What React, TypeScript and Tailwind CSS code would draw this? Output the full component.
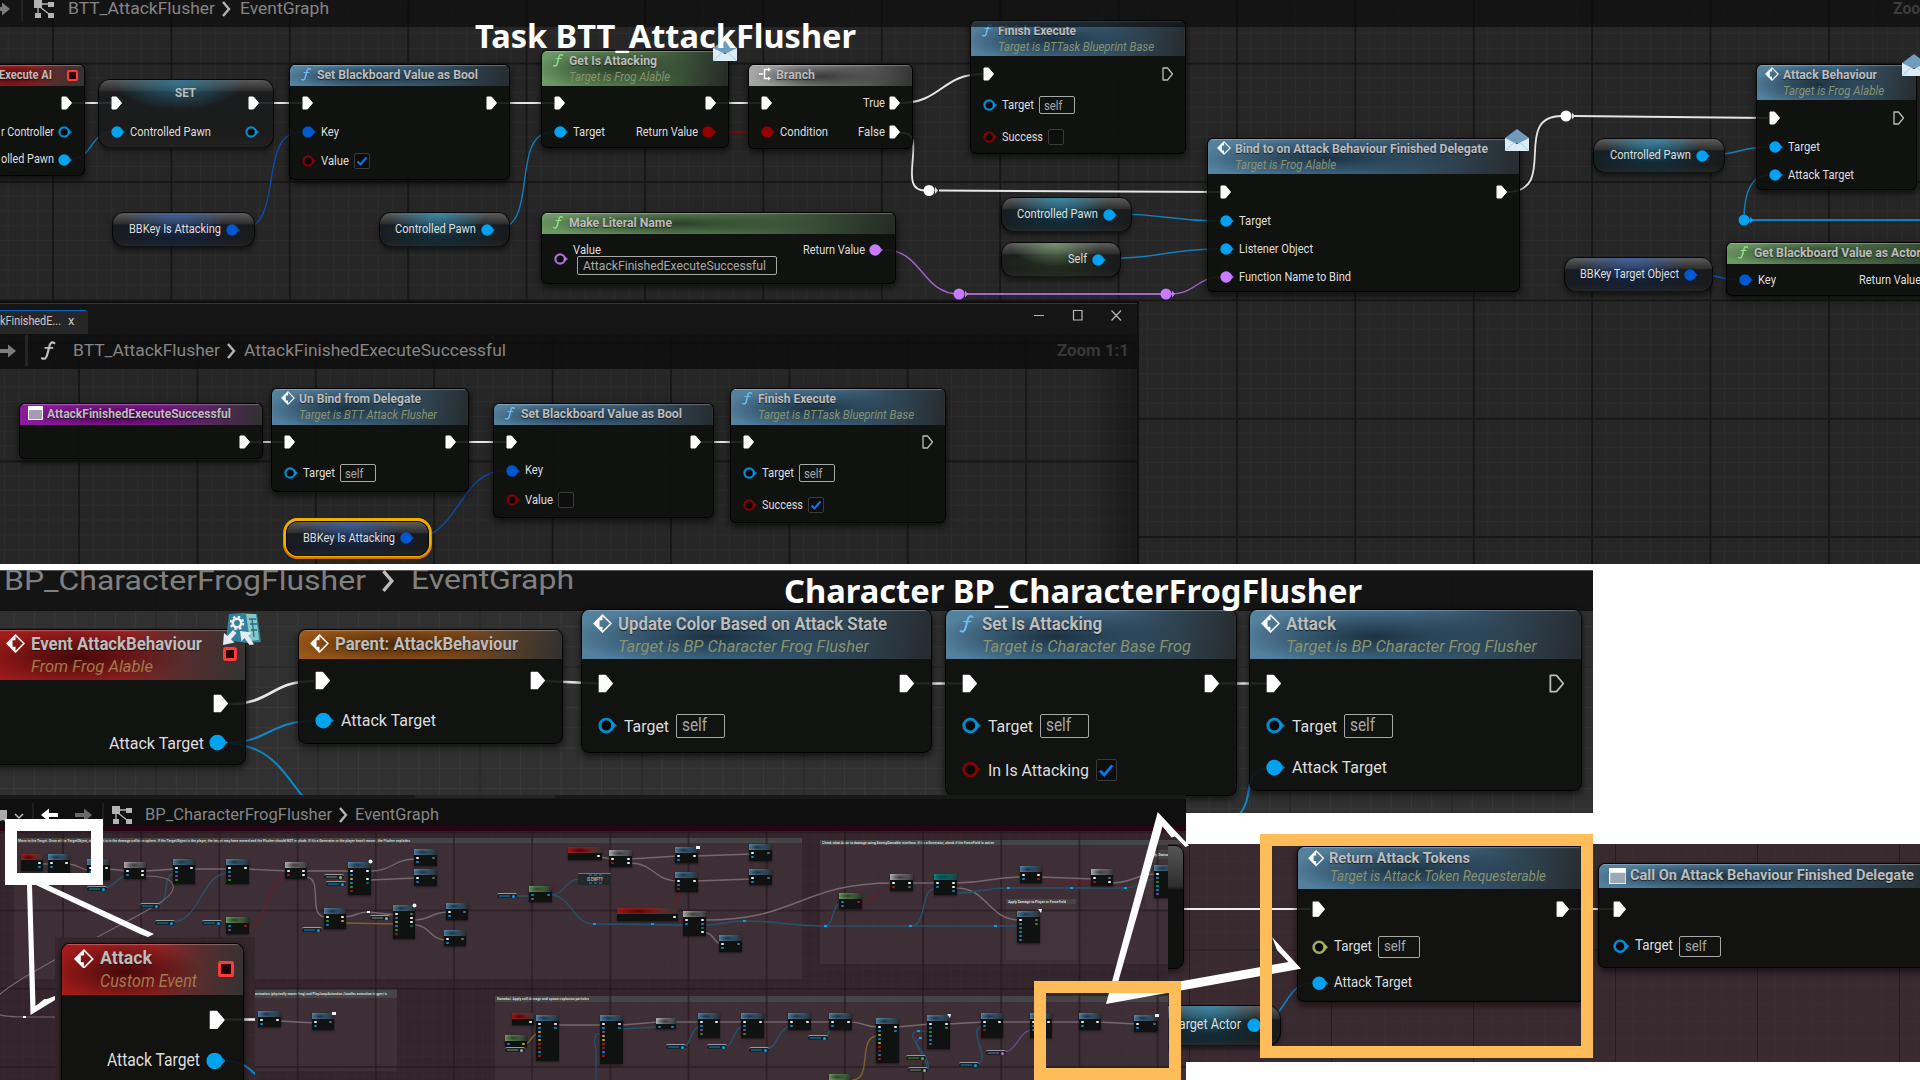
import React, { useLayoutEffect, useRef } from "react";

type Tone = "blue" | "green" | "red" | "gray" | "purple" | "orange" | "teal";
type Kind = "exec" | "hollow" | "ring" | "dot";
type PinSpec = { k: Kind; c?: string; t?: string; w?: number; self?: boolean; chk?: "on" | "off" };
type Row = { y: number; l?: PinSpec; r?: PinSpec };

const CYAN = "#00a2f2";
const KEY = "#0058d0";
const RED = "#960000";
const NAME = "#c97bff";

const tones: Record<Tone, string> = {
  blue: "bg-[radial-gradient(ellipse_42%_60%_at_38%_55%,#1b3140_0%,#1b314000_100%),linear-gradient(100deg,#55829f_0%,#456f8e_45%,#31495a_72%,#262b2e_100%)]",
  green: "bg-[radial-gradient(ellipse_42%_60%_at_38%_50%,#2b4028_0%,#2b402800_100%),linear-gradient(100deg,#6d9a65_0%,#587f52_45%,#3c5539_72%,#252a25_100%)]",
  red: "bg-[radial-gradient(ellipse_42%_60%_at_35%_55%,#450808_0%,#45080800_100%),linear-gradient(100deg,#a31a1a_0%,#9a2224_50%,#5c2c2c_72%,#333_100%)]",
  gray: "bg-[radial-gradient(ellipse_42%_60%_at_45%_55%,#3a3a3a_0%,#3a3a3a00_100%),linear-gradient(100deg,#a8a8a8_0%,#7c7c7c_45%,#5a5a5a_72%,#333_100%)]",
  purple: "bg-[radial-gradient(ellipse_42%_60%_at_42%_55%,#420449_0%,#42044900_100%),linear-gradient(100deg,#8c1a9c_0%,#821a90_55%,#55275c_78%,#303030_100%)]",
  orange: "bg-[radial-gradient(ellipse_42%_60%_at_38%_50%,#4a2707_0%,#4a270700_100%),linear-gradient(100deg,#9a5717_0%,#935318_50%,#5e4128_75%,#303030_100%)]",
  teal: "bg-[radial-gradient(ellipse_42%_60%_at_38%_50%,#044_0%,#04444400_100%),linear-gradient(100deg,#158080_0%,#126a6a_50%,#203c3c_100%)]",
};

/* Text squeezed or stretched horizontally to an exact width. */
function Fit({ w, size, className = "", wrap = "", children }: { w?: number; size: number; className?: string; wrap?: string; children: string }) {
  const ref = useRef<HTMLSpanElement>(null);
  useLayoutEffect(() => {
    const el = ref.current;
    if (!el || !w) return;
    el.style.transform = "none";
    el.style.transform = `scaleX(${w / el.getBoundingClientRect().width})`;
  }, [w, size, children]);
  return (
    <span className={`block shrink-0 whitespace-nowrap leading-none ${wrap}`} style={{ width: w, fontSize: size }}>
      <span ref={ref} className={`inline-block origin-left whitespace-nowrap leading-none ${className}`}>
        {children}
      </span>
    </span>
  );
}

function Label({ x, y, w, size, className = "", children }: { x: number; y: number; w?: number; size: number; className?: string; children: string }) {
  return (
    <div className="absolute flex h-0 items-center" style={{ left: x, top: y }}>
      <Fit w={w} size={size} className={className}>{children}</Fit>
    </div>
  );
}

function Pin({ p, s }: { p: PinSpec; s: number }) {
  if (p.k === "exec" || p.k === "hollow") {
    const on = p.k === "exec";
    return (
      <svg className="shrink-0" width={11.5 * s} height={14 * s} viewBox="0 0 11.5 14">
        <path d="M1 1h4.5L10.5 7l-5 6H1z" fill={on ? "#fff" : "none"} stroke={on ? "#fff" : "#bdbdbd"} strokeWidth={on ? 1 : 1.3} strokeLinejoin="round" />
      </svg>
    );
  }
  return (
    <svg className="shrink-0" width={14 * s} height={14 * s} viewBox="0 0 14 14">
      <path d="M10.6 4.2L14 7l-3.400 2.800z" fill={p.c} opacity=".8" />
      {p.k === "dot" ? <circle cx="6.100" cy="7" r="5.800" fill={p.c} /> : <circle cx="6.100" cy="7" r="4.700" fill="#050505" stroke={p.c} strokeWidth="2.200" opacity=".85" />}
    </svg>
  );
}

function Check({ on, s }: { on: boolean; s: number }) {
  return (
    <span className="flex shrink-0 items-center justify-center rounded-[2px] border border-[#3a3a3a] bg-[#0e0e0e]" style={{ width: 16 * s, height: 16 * s }}>
      {on && (
        <svg width={12 * s} height={12 * s} viewBox="0 0 12 12">
          <path d="M1.500 6.500l3 3L10.500 2.500" fill="none" stroke="#0a76f0" strokeWidth="2" />
        </svg>
      )}
    </span>
  );
}

function Side({ p, s, right }: { p: PinSpec; s: number; right?: boolean }) {
  return (
    <div className={`flex items-center ${right ? "flex-row-reverse" : ""}`} style={{ gap: (right ? 4 : 5) * s }}>
      <Pin p={p} s={s} />
      {p.t && <Fit w={p.w} size={12.4 * s} className="text-[#dedede]">{p.t}</Fit>}
      {p.self && (
        <span className="flex shrink-0 items-center rounded-[2px] border border-[#a8a8a8]" style={{ width: 36 * s, height: 18 * s, paddingLeft: 4 * s }}>
          <Fit w={18.500 * s} size={13 * s} className="text-[#a8a8a8]">self</Fit>
        </span>
      )}
      {p.chk && <Check on={p.chk === "on"} s={s} />}
    </div>
  );
}

function Icon({ kind, s }: { kind: string; s: number }) {
  if (kind === "f")
    return (
      <svg className="shrink-0" width={14 * s} height={14 * s} viewBox="0 0 14 14" fill="none" stroke="currentColor" strokeLinecap="round">
        <path d="M11.300 2.200C9.500.9 8.300 2 7.800 4.500L6.400 10c-.6 2.600-1.900 3.500-3.700 2.600" strokeWidth="1.500" />
        <path d="M5 5.500h5" strokeWidth="1.200" />
      </svg>
    );
  if (kind === "event")
    return (
      <svg className="shrink-0" width={14 * s} height={14 * s} viewBox="0 0 14 14">
        <path d="M7 .8L13.200 7 7 13.200.8 7z" fill="none" stroke="#f0f0f0" strokeWidth="1.200" />
        <path d="M7 .8V4.600H4.800v4.800H7v3.800L.8 7z" fill="#fff" />
      </svg>
    );
  if (kind === "branch")
    return (
      <svg className="shrink-0" width={14 * s} height={14 * s} viewBox="0 0 14 14" fill="none" stroke="#fff" strokeWidth="1.500">
        <path d="M1 7h4M11 2.500H6.500v9H11" />
        <path d="M10 .5l3 2-3 2zM10 9.500l3 2-3 2z" fill="#fff" stroke="none" />
      </svg>
    );
  return (
    <svg className="shrink-0" width={15 * s} height={14 * s} viewBox="0 0 15 14">
      <path d="M.5.5h14v13H.5z" fill="#a9b3b8" fillOpacity=".85" stroke="#fff" />
      <path d="M.5.5h14V4H.5z" fill="#fff" />
    </svg>
  );
}

type NodeProps = {
  x: number; y: number; w: number; h: number; hh: number; tone: Tone; icon?: string;
  title: string; tx: number; tw: number; sub?: string; sw?: number; rows: Row[]; s?: number; stop?: boolean; iconTone?: string; bias?: number;
};

/* Graph node: header strip plus pin rows centred on their y offsets. */
function GNode({ x, y, w, h, hh, tone, icon, title, tx, tw, sub, sw, rows, s = 1, stop, iconTone = "text-[#6cbcf2]", bias = 0 }: NodeProps) {
  const lift = s === 1 ? 2 : 0;
  return (
    <div
      className="absolute overflow-hidden border border-black/90 bg-[#0e110ee8] shadow-[0_3px_6px_1px_rgba(0,0,0,0.55)]"
      style={{ left: x - 1, top: y, width: w + 1, height: h, borderRadius: 6 * s }}
    >
      <div className={`relative shadow-[inset_0_1px_1px_rgba(255,255,255,0.28)] ${tones[tone]}`} style={{ height: hh }}>
        <div className="flex items-center" style={{ height: 20.5 * s - lift }}>
          {icon && (
            <span className={`flex w-0 shrink-0 justify-center ${iconTone}`} style={{ marginLeft: tx - 11.200 * s, marginRight: 11.200 * s }}>
              <Icon kind={icon} s={s} />
            </span>
          )}
          <span className="block" style={{ marginLeft: icon ? 0 : tx }}>
            <Fit w={tw} size={13.200 * s} className="font-bold text-[#bdbdbd] [text-shadow:0_1px_1px_rgba(0,0,0,0.6)]">{title}</Fit>
          </span>
        </div>
        {sub && (
          <div className="flex h-0 items-center" style={{ marginLeft: tx, marginTop: 6 * s + lift }}>
            <Fit w={sw} size={12.400 * s} className={`italic ${tone === "red" ? "text-[#a2794c]" : "text-[#86936f]"}`}>{sub}</Fit>
          </div>
        )}
        {stop && (
          <span
            className="absolute border-[#fb3a3a] bg-[#200]"
            style={{ right: 6.500 * s, top: hh / 2 - 6 * s, width: 11 * s, height: 11 * s, borderWidth: 2.500 * s, borderRadius: 2 * s }}
          />
        )}
      </div>
      <div style={{ paddingLeft: 11 * s + 1, paddingRight: 12 * s + bias }}>
        {rows.map((r, i) => (
          <div key={i} className="flex h-0 items-center justify-between" style={{ marginTop: r.y - (i ? rows[i - 1].y : y + hh + 1) }}>
            {r.l ? <Side p={r.l} s={s} /> : <span />}
            {r.r && <Side p={r.r} s={s} right />}
          </div>
        ))}
      </div>
    </div>
  );
}

const glows: Record<string, string> = {
  cyan: "bg-[radial-gradient(ellipse_38%_70%_at_45%_0%,#3593b8cc_0%,#3593b800_100%),radial-gradient(ellipse_55%_60%_at_45%_60%,#0c3c52aa_0%,#0c3c5200_100%),linear-gradient(180deg,#5c5c5c_0%,#2e2e2e_32%,#181a1b_36%,#1a1a1a_80%,#242424_100%)]",
  key: "bg-[radial-gradient(ellipse_38%_70%_at_45%_0%,#3c62a8cc_0%,#3c62a800_100%),radial-gradient(ellipse_55%_60%_at_45%_60%,#10254caa_0%,#10254c00_100%),linear-gradient(180deg,#5c5c5c_0%,#2e2e2e_32%,#181a1b_36%,#1a1a1a_80%,#242424_100%)]",
  green: "bg-[radial-gradient(ellipse_38%_70%_at_45%_0%,#7fa078cc_0%,#7fa07800_100%),radial-gradient(ellipse_55%_60%_at_45%_60%,#263a22aa_0%,#263a2200_100%),linear-gradient(180deg,#5c5c5c_0%,#2e2e2e_32%,#181a1b_36%,#1a1a1a_80%,#242424_100%)]",
};

function Pill({ x, y, w, h = 35, glow, t, tw, c = CYAN, s = 1, selected }: { x: number; y: number; w: number; h?: number; glow: string; t: string; tw: number; c?: string; s?: number; selected?: boolean }) {
  return (
    <div
      className={`absolute flex items-center justify-end border border-black/80 ${selected ? "shadow-[0_-1px_0_2px_#f0b000,0_1px_0_2px_#d87000,0_0_0_3px_#e88a00]" : "shadow-[0_3px_5px_rgba(0,0,0,0.5)]"} ${glows[glow]}`}
      style={{ left: x, top: y, width: w, height: h, borderRadius: 12 * s, paddingRight: 14 * s, gap: 5 * s }}
    >
      <Fit w={tw} size={12.400 * s} className="text-[#dedede]">{t}</Fit>
      <Pin p={{ k: "dot", c }} s={s} />
    </div>
  );
}

type Wire = [number, number, number, number, string, number?];

/* Bezier wires with horizontal tangents. */
function Wires({ list, extra }: { list: Wire[]; extra?: React.ReactNode }) {
  return (
    <svg className="absolute left-0 top-0" width="1920" height="1080" fill="none">
      {list.map(([x1, y1, x2, y2, c, sw = 1.400], i) => {
        const m = Math.max(Math.abs(x2 - x1) / 2, Math.min(Math.abs(y2 - y1) * 0.5, 45));
        const d = Math.abs(y2 - y1) < 4 ? `M${x1} ${y1}L${x2} ${y2}` : `M${x1} ${y1}C${x1 + m} ${y1} ${x2 - m} ${y2} ${x2} ${y2}`;
        return <path key={i} d={d} stroke={c} strokeWidth={sw} />;
      })}
      {extra}
    </svg>
  );
}

/* Clipped window whose children share the canvas coordinates. */
function Panel({ x, y, w, h, className, children }: { x: number; y: number; w: number; h: number; className: string; children: React.ReactNode }) {
  return (
    <section className={`absolute overflow-hidden ${className}`} style={{ left: x, top: y, width: w, height: h }}>
      <div className="absolute h-[1080px] w-[1920px]" style={{ left: -x, top: -y }}>{children}</div>
    </section>
  );
}

function Grid({ x, y, p, major, minor }: { x: number; y: number; p: number; major: string; minor: string }) {
  const q = p / 8;
  const line = (c: string, t: number) => `linear-gradient(to right,${c} ${t}px,transparent ${t}px),linear-gradient(to bottom,${c} ${t}px,transparent ${t}px)`;
  return (
    <div
      className="absolute inset-0"
      style={{
        backgroundImage: `${line(major, 1.5)},${line(minor, 1)}`,
        backgroundSize: `${p}px ${p}px,${p}px ${p}px,${q}px ${q}px,${q}px ${q}px`,
        backgroundPosition: `${x}px ${y}px,${x}px ${y}px,${x}px ${y}px,${x}px ${y}px`,
      }}
    />
  );
}

function Box({ x, y, w, h, className }: { x: number; y: number; w: number; h: number; className: string }) {
  return <div className={`absolute ${className}`} style={{ left: x, top: y, width: w, height: h }} />;
}

function Envelope({ x, y }: { x: number; y: number }) {
  return (
    <svg className="absolute" style={{ left: x, top: y }} width="24" height="23" viewBox="0 0 24 23">
      <path d="M0 9L12 0l12 9v5H0z" fill="#6f9bbd" />
      <path d="M0 9l12 6 12-6v13H0z" fill="#dcecf6" />
      <path d="M0 22l9-8.500M24 22l-9-8.500" stroke="#a9c7dc" strokeWidth="1" />
    </svg>
  );
}

const glyphShapes = {
  right: <path d="M0 8h9V3.500L17 10l-8 6.500V12H0z" fill="currentColor" />,
  left: <path d="M17 8H8V3.500L0 10l8 6.500V12h9z" fill="currentColor" />,
  chevron: <path d="M6 3l6 7-6 7" fill="none" stroke="currentColor" strokeWidth="2.400" />,
  graph: (
    <g fill="currentColor">
      <path d="M0 1h8v8H0zM14 3h6v5h-6zM1 14h6v5H1zM14 14h6v5h-6z" />
      <path d="M8 5h6M4 9v6M6 8l9 7" stroke="currentColor" strokeWidth="1.300" />
    </g>
  ),
};

function Glyph({ name, className = "", size = 20 }: { name: keyof typeof glyphShapes; className?: string; size?: number }) {
  return (
    <svg className={`shrink-0 ${className}`} width={size} height={size} viewBox="0 0 20 20">
      {glyphShapes[name]}
    </svg>
  );
}

const X: PinSpec = { k: "exec" };
const HOLLOW: PinSpec = { k: "hollow" };
const inPin = (t: string, w: number, c = CYAN): PinSpec => ({ k: "dot", c, t, w });

function TaskGraph() {
  const W = "#e6e6e6";
  const B = "#0f80bd";
  return (
    <Panel x={0} y={0} w={1920} h={564} className="bg-[#262626]">
      <Grid x={52} y={62.500} p={118.400} major="#171717" minor="#2c2c2c" />
      <Wires
        list={[
          [72, 103, 111, 103, W, 2], [259, 103, 302, 103, W, 2], [498, 103, 554, 103, W, 2], [715, 103, 761, 103, W, 2],
          [715, 132, 761, 132, RED], [900, 103, 983, 74, W, 2], [939, 190.500, 1220, 192, W, 2],
          [885, 250, 959, 294, "#a066cc"], [965, 294, 1166, 294, "#a066cc", 1.800], [1170, 294, 1222, 277, "#a066cc"],
          [1117, 214, 1220, 221, B], [1107, 258.500, 1220, 249, B], [1574, 116, 1768, 118, W, 2],
          [1710, 155, 1768, 147, B], [1744, 220, 1920, 220, B, 1.800], [1699, 274, 1738, 280, KEY],
          [72, 159, 111, 132, B], [241, 229, 301, 132, "#0d4ba8"], [496, 229, 553, 132, B],
        ]}
        extra={
          <>
            <path d="M900 132.500C916 132.500 914 145 912.500 162S911 190.500 925 190.500" stroke={W} strokeWidth="1.800" />
            <path d="M1507 192C1560 192 1510 116 1562 116" stroke={W} strokeWidth="1.800" />
            <path d="M1768 175C1748 176 1744 200 1744 220" stroke={B} strokeWidth="1.400" />
            <circle cx="929" cy="190.500" r="5.500" fill="#fff" /><path d="M935 187l3 3.500-3 3.500z" fill="#ddd" />
            <circle cx="1566" cy="116" r="5.500" fill="#fff" /><path d="M1572 112.500l3 3.500-3 3.500z" fill="#ddd" />
            <circle cx="959" cy="294" r="5.500" fill={NAME} /><path d="M965 290.500l3 3.500-3 3.500z" fill={NAME} />
            <circle cx="1166" cy="294" r="5.500" fill={NAME} /><path d="M1172 290.500l3 3.500-3 3.500z" fill={NAME} />
            <circle cx="1744" cy="220" r="5.500" fill={CYAN} /><path d="M1750 216.500l3 3.500-3 3.500z" fill={CYAN} />
          </>
        }
      />
      <GNode x={-30} y={64} w={115} h={112} hh={21} tone="red" title="Execute AI" tx={29} tw={53} stop
        rows={[{ y: 103, r: X }, { y: 132, r: { k: "ring", c: CYAN, t: "r Controller", w: 53 } }, { y: 159.500, r: { k: "dot", c: CYAN, t: "olled Pawn", w: 53 } }]} />
      <div className="absolute left-[98px] top-[79px] h-[69px] w-[176px] rounded-xl border border-black/80 bg-[radial-gradient(ellipse_38%_45%_at_46%_0%,#2b7d9fcc_0%,#2b7d9f00_100%),linear-gradient(180deg,#585858_0%,#2c2c2c_16%,#1a1c1de8_18%,#1a1a1ae8_80%,#222_100%)] shadow-[0_3px_5px_rgba(0,0,0,0.5)]">
        <div className="flex h-[25px] items-center justify-center">
          <Fit w={21} size={13.200} className="font-bold text-[#bdbdbd]" wrap="-ml-[2px]">SET</Fit>
        </div>
        <div className="-mt-[2px] flex h-0 items-center justify-between pl-[12px] pr-[14px]"><Pin p={X} s={1} /><Pin p={X} s={1} /></div>
        <div className="mt-[29px] flex h-0 items-center justify-between pl-[12px] pr-[14px]">
          <Side p={inPin("Controlled Pawn", 81)} s={1} />
          <Pin p={{ k: "ring", c: CYAN }} s={1} />
        </div>
      </div>
      <GNode x={290} y={64} w={220} h={116} hh={21} tone="blue" icon="f" title="Set Blackboard Value as Bool" tx={27} tw={161}
        rows={[{ y: 103, l: X, r: X }, { y: 132, l: inPin("Key", 18, KEY) }, { y: 161, l: { k: "ring", c: RED, t: "Value", w: 28, chk: "on" } }]} />
      <Pill x={112} y={212} w={143} glow="key" t="BBKey Is Attacking" tw={92} c={KEY} />
      <Pill x={379} y={212} w={131} glow="cyan" t="Controlled Pawn" tw={81} />
      <GNode x={542} y={50} w={187} h={98} hh={35} tone="green" icon="f" iconTone="text-[#8fe08a]" title="Get Is Attacking" tx={27} tw={88} sub="Target is Frog Alable" sw={101}
        rows={[{ y: 103, l: X, r: X }, { y: 132, l: inPin("Target", 32), r: { k: "dot", c: RED, t: "Return Value", w: 62 } }]} />
      <Envelope x={713} y={39} />
      <GNode x={749} y={64} w={164} h={85} hh={21} tone="gray" icon="branch" title="Branch" tx={27} tw={39}
        rows={[{ y: 103, l: X, r: { k: "exec", t: "True", w: 22 } }, { y: 132, l: inPin("Condition", 48, RED), r: { k: "exec", t: "False", w: 27 } }]} />
      <GNode x={971} y={20} w={215} h={134} hh={35} tone="blue" icon="f" title="Finish Execute" tx={27} tw={78} sub="Target is BTTask Blueprint Base" sw={156}
        rows={[{ y: 74, l: X, r: HOLLOW }, { y: 105, l: { k: "ring", c: CYAN, t: "Target", w: 32, self: true } }, { y: 137, l: { k: "ring", c: RED, t: "Success", w: 41, chk: "off" } }]} />
      <GNode x={542} y={212} w={354} h={72} hh={21} tone="green" icon="f" iconTone="text-[#8fe08a]" title="Make Literal Name" tx={27} tw={103}
        rows={[{ y: 250, r: { k: "dot", c: NAME, t: "Return Value", w: 62 } }, { y: 259, l: { k: "ring", c: NAME } }]} />
      <Label x={573} y={250} w={28} size={12.400} className="text-[#dedede]">Value</Label>
      <div className="absolute left-[577px] top-[256px] flex h-[19px] w-[200px] items-center rounded-[2px] border border-[#a8a8a8] pl-[5px]">
        <Fit w={183} size={13} className="text-[#a8a8a8]">AttackFinishedExecuteSuccessful</Fit>
      </div>
      <Pill x={1001} y={197} w={131} glow="cyan" t="Controlled Pawn" tw={81} />
      <Pill x={1001} y={242} w={120} glow="green" t="Self" tw={19} />
      <GNode x={1208} y={138} w={312} h={154} hh={35} tone="blue" icon="event" title="Bind to on Attack Behaviour Finished Delegate" tx={27} tw={253} sub="Target is Frog Alable" sw={101}
        rows={[{ y: 192, l: X, r: X }, { y: 221, l: inPin("Target", 32) }, { y: 249, l: inPin("Listener Object", 74) }, { y: 277, l: inPin("Function Name to Bind", 112, NAME) }]} />
      <Envelope x={1505} y={129} />
      <Pill x={1593} y={138} w={132} glow="cyan" t="Controlled Pawn" tw={81} />
      <GNode x={1757} y={64} w={160} h={126} hh={35} tone="blue" icon="event" title="Attack Behaviour" tx={26} tw={94} sub="Target is Frog Alable" sw={101}
        rows={[{ y: 118, l: X, r: HOLLOW }, { y: 147, l: inPin("Target", 32) }, { y: 175, l: inPin("Attack Target", 66) }]} />
      <Envelope x={1902} y={54} />
      <Pill x={1564} y={257} w={149} glow="key" t="BBKey Target Object" tw={99} c={KEY} />
      <GNode x={1727} y={242} w={240} h={54} hh={21} tone="green" icon="f" iconTone="text-[#8fe08a]" title="Get Blackboard Value as Actor" tx={27} tw={167}
        rows={[{ y: 280, l: inPin("Key", 18, KEY), r: { k: "dot", c: CYAN, t: "Return Value", w: 62 } }]} bias={15} />
      <header className="absolute inset-x-0 top-0 flex h-[27px] items-center bg-[#0b0b0ba8] pb-[10px] text-[#b4b4b4]">
        <Glyph name="right" className="-ml-[7px] text-[#7c7c7c]" />
        <span className="ml-2 h-[25px] w-[2px] bg-[#242424]" />
        <Glyph name="graph" className="ml-[11px]" />
        <Fit w={147} size={17} className="text-[#858585]" wrap="ml-[14px]">BTT_AttackFlusher</Fit>
        <Glyph name="chevron" className="ml-[2px]" />
        <Fit w={89} size={17} className="text-[#858585]" wrap="ml-[3px] -mt-px">EventGraph</Fit>
        <Fit w={41} size={17} className="font-bold text-[#3c3c3c]" wrap="ml-auto -mr-[14px]">Zoom</Fit>
      </header>
      <Label x={475} y={36} w={381} size={33} className="font-bold text-white [font-family:'Noto_Sans',sans-serif]">Task BTT_AttackFlusher</Label>
    </Panel>
  );
}

function FunctionWindow() {
  const W = "#e6e6e6";
  return (
    <Panel x={0} y={301} w={1139} h={263} className="bg-[#262626]">
      <Grid x={78} y={342} p={118.400} major="#171717" minor="#2c2c2c" />
      <Wires list={[[250, 442, 283, 442, W, 1.800], [456, 442, 506, 442, W, 1.800], [701, 442, 742, 442, W, 1.800], [413, 538, 505, 470.500, "#0d4ba8"]]} />
      <Box x={1090} y={369} w={49} h={200} className="bg-linear-to-r from-transparent to-black/35" />
      <div className="absolute left-0 top-[301px] flex w-[1137px] flex-col">
        <div className="flex h-[33px] items-end justify-between border-t-2 border-[#0d0d0d] bg-[#151515] shadow-[inset_0_1px_0_#333]">
          <div className="flex h-[24px] w-[88px] items-center gap-[7px] rounded-tr-[4px] border-t border-[#0763c4] bg-[#262626] pb-[2px]">
            <Fit w={61} size={12.600} className="text-[#c8c8c8]">kFinishedE...</Fit>
            <span className="-mt-[2px] text-[13px] leading-none text-[#c8c8c8]">x</span>
          </div>
          <svg className="mb-[11px] mr-[11px]" width="96" height="16" fill="none" stroke="#b8b8b8" strokeWidth="1.200">
            <path d="M4 8.500h10M43.500 3.500h8.500v9.500h-8.500zM81.500 3.500l9.500 10M91 3.500l-9.500 10" />
          </svg>
        </div>
        <div className="flex h-[35px] items-center bg-[#0e0e0ed9] pb-[2px] text-[#b4b4b4]">
          <Glyph name="right" className="-ml-px text-[#7c7c7c]" />
          <span className="ml-[6px] h-[31px] w-[3px] bg-[#242424]" />
          <span className="ml-[10px] text-[#c0c0c0]"><Icon kind="f" s={1.450} /></span>
          <Fit w={147} size={17} className="text-[#858585]" wrap="ml-[15px]">BTT_AttackFlusher</Fit>
          <Glyph name="chevron" className="ml-[2px]" />
          <Fit w={262} size={17} className="text-[#858585]" wrap="ml-[2px] -mt-px">AttackFinishedExecuteSuccessful</Fit>
          <Fit w={72} size={17} className="font-bold text-[#383838]" wrap="ml-auto mr-2 -mt-px">Zoom 1:1</Fit>
        </div>
      </div>
      <Box x={1137} y={301} w={2} h={263} className="bg-[#101010]" />
      <GNode x={20} y={403} w={243} h={56} hh={21} tone="purple" icon="window" title="AttackFinishedExecuteSuccessful" tx={27} tw={184} rows={[{ y: 442, r: X }]} />
      <GNode x={272} y={388} w={197} h={104} hh={36} tone="blue" icon="event" title="Un Bind from Delegate" tx={27} tw={122} sub="Target is BTT Attack Flusher" sw={138}
        rows={[{ y: 442, l: X, r: X }, { y: 473, l: { k: "ring", c: CYAN, t: "Target", w: 32, self: true } }]} />
      <GNode x={494} y={403} w={220} h={115} hh={21} tone="blue" icon="f" title="Set Blackboard Value as Bool" tx={27} tw={161}
        rows={[{ y: 442, l: X, r: X }, { y: 470.500, l: inPin("Key", 18, KEY) }, { y: 500, l: { k: "ring", c: RED, t: "Value", w: 28, chk: "off" } }]} />
      <GNode x={731} y={388} w={215} h={135} hh={36} tone="blue" icon="f" title="Finish Execute" tx={27} tw={78} sub="Target is BTTask Blueprint Base" sw={156}
        rows={[{ y: 442, l: X, r: HOLLOW }, { y: 473, l: { k: "ring", c: CYAN, t: "Target", w: 32, self: true } }, { y: 505, l: { k: "ring", c: RED, t: "Success", w: 41, chk: "on" } }]} />
      <Pill x={286} y={520.500} w={143} glow="key" t="BBKey Is Attacking" tw={92} c={KEY} selected />
    </Panel>
  );
}

function CharacterGraph() {
  const W = "#e6e6e6";
  const s = 1.360;
  return (
    <Panel x={0} y={570} w={1593} h={243} className="bg-[#303030]">
      <Grid x={155.500} y={666.500} p={162} major="#212121" minor="#383838" />
      <Wires
        list={[[229, 704, 314, 681, W, 2.600], [225, 743, 313, 721, "#0f86c6", 2], [545, 681, 598, 683.500, W, 2.600], [914, 683.500, 962, 683.500, W, 2.600], [1219, 683.500, 1266, 683.500, W, 2.600]]}
        extra={
          <>
            <path d="M225 743C270 745 280 768 304 798" stroke="#0f86c6" strokeWidth="2" />
            <path d="M1270 768C1240 770 1256 796 1239 815" stroke="#0f86c6" strokeWidth="2" />
          </>
        }
      />
      <header className="absolute left-0 top-[570px] flex h-[41px] w-full items-center border-t border-[#555] bg-[#111111ea] pb-[20px] text-[#bdbdbd]">
        <Fit w={362} size={28} className="text-[#808080]" wrap="ml-1">BP_CharacterFrogFlusher</Fit>
        <Glyph name="chevron" size={28} className="ml-[9px]" />
        <Fit w={163} size={28} className="text-[#808080]" wrap="ml-[8px] -mt-[3px]">EventGraph</Fit>
      </header>
      <GNode x={-12} y={629} w={258} h={136} hh={50} tone="red" icon="event" title="Event AttackBehaviour" tx={43} tw={171} sub="From Frog Alable" sw={122} s={s} bias={0.500}
        rows={[{ y: 704, r: X }, { y: 743, r: { k: "dot", c: CYAN, t: "Attack Target", w: 95 } }]} />
      <Box x={222.500} y={646.500} w={14.500} h={14} className="rounded-[3px] border-[3.5px] border-[#fb3a3a] bg-[#200]" />
      <svg className="absolute left-[222px] top-[612px]" width="40" height="34" viewBox="0 0 40 34">
        <path d="M7 2l14-1 14 1 4 28-14 1-21-3z" fill="#33809a" />
        <path d="M24 2l10 0 3 26-9 1z" fill="#86c9c4" />
        <path d="M27 7h7M28 12h7M30 7l2 18M29 18h6" stroke="#276c80" strokeWidth="1.300" />
        <path d="M1 33l1-12 3.500 3 5.500-6 3.500 3-5.500 6.500 3.500 3zM18 19l12 1.500-3.500 3 5.500 9-4.500.5-5-7-3 3.500z" fill="#e8eaf4" />
        <circle cx="15" cy="11" r="4.200" fill="none" stroke="#f0f0f0" strokeWidth="2.600" />
        <circle cx="15" cy="11" r="6.300" fill="none" stroke="#f0f0f0" strokeWidth="2" strokeDasharray="2.500 2.450" />
      </svg>
      <GNode x={299} y={629} w={264} h={115} hh={29} tone="orange" icon="event" title="Parent: AttackBehaviour" tx={36} tw={183} s={s}
        rows={[{ y: 681, l: X, r: X }, { y: 720.500, l: inPin("Attack Target", 95) }]} />
      <GNode x={582} y={609} w={350} h={144} hh={49} tone="blue" icon="event" title="Update Color Based on Attack State" tx={36} tw={269} sub="Target is BP Character Frog Flusher" sw={251} s={s}
        rows={[{ y: 683.500, l: X, r: X }, { y: 726, l: { k: "ring", c: CYAN, t: "Target", w: 45, self: true } }]} />
      <GNode x={946} y={609} w={291} h={187} hh={49} tone="blue" icon="f" title="Set Is Attacking" tx={36} tw={120} sub="Target is Character Base Frog" sw={209} s={s}
        rows={[{ y: 683.500, l: X, r: X }, { y: 726, l: { k: "ring", c: CYAN, t: "Target", w: 45, self: true } }, { y: 770, l: { k: "ring", c: RED, t: "In Is Attacking", w: 101, chk: "on" } }]} />
      <GNode x={1250} y={609} w={332} h={182} hh={49} tone="blue" icon="event" title="Attack" tx={36} tw={50} sub="Target is BP Character Frog Flusher" sw={251} s={s}
        rows={[{ y: 683.500, l: X, r: HOLLOW }, { y: 726, l: { k: "ring", c: CYAN, t: "Target", w: 45, self: true } }, { y: 767.500, l: inPin("Attack Target", 95) }]} />
      <Label x={784} y={592} w={578} size={32.500} className="font-bold text-white [font-family:'Noto_Sans',sans-serif]">Character BP_CharacterFrogFlusher</Label>
    </Panel>
  );
}

/* x, y, w, h, tone, left pins, right pins ("." leaves a slot empty) */
const minis: [number, number, number, number, Tone, string, string][] = [
  [21, 854, 22, 17, "red", "", "wb"], [48, 854, 22, 20, "blue", "wb", "w"], [87, 859, 23, 21, "blue", "wb", "w"], [124, 862, 22, 17, "gray", "wb", "ww"],
  [173, 859, 22, 25, "blue", "wbpg", "w"], [226, 859, 23, 25, "blue", "wbpg", "w"], [285, 862, 22, 17, "gray", "wr", "ww"], [348, 862, 23, 33, "blue", "wbybgr", "w.wt"],
  [414, 849, 23, 17, "blue", "wb", "h"], [414, 869, 23, 17, "blue", "wb", "h"], [324, 908, 22, 21, "blue", "wgb", "wy"], [393, 905, 22, 34, "blue", "wbybgr", "hwwt"],
  [446, 903, 22, 17, "blue", "wb", "h"], [444, 930, 22, 16, "blue", "wb", "h"], [226, 917, 23, 17, "green", "bp", "r"],
  [568, 847, 34, 13, "red", "", "w"], [609, 850, 23, 17, "gray", "wr", "ww"], [675, 847, 23, 16, "blue", "wb", "w"], [675, 872, 23, 20, "blue", "wbr", "w"],
  [749, 844, 23, 17, "blue", "wb", "h"], [749, 869, 23, 16, "blue", "wb", "h"], [529, 886, 23, 16, "green", "bp", "b"], [617, 908, 61, 13, "red", "", "w"],
  [683, 911, 23, 25, "gray", "wb", "wbtw"], [719, 935, 23, 17, "blue", "wb", "h"], [839, 893, 23, 16, "green", "bp", "r"],
  [890, 874, 23, 17, "gray", "wr", "wh"], [934, 874, 23, 21, "teal", "wb", "wwb"], [1020, 866, 22, 17, "blue", "wb", "wr"], [1091, 869, 22, 17, "gray", "wr", "hw"],
  [1017, 911, 23, 32, "blue", "wbgbbp", "hg"], [1154, 865, 22, 33, "blue", "wbgbbp", "h"],
  [258, 1011, 23, 16, "blue", "wb", "w"], [312, 1013, 22, 17, "blue", "wb", "h"], [512, 1013, 22, 12, "red", "", "w"], [505, 1035, 22, 12, "green", "b", "y"],
  [536, 1015, 23, 46, "blue", "wbybyrrbr", "wb"], [600, 1015, 23, 49, "blue", "wbpyyrrbr", "wb"], [656, 1018, 20, 11, "gray", "b", "b"],
  [698, 1013, 22, 25, "blue", "wbpg", "w"], [741, 1013, 23, 25, "blue", "wbpg", "w"], [788, 1013, 23, 17, "blue", "wb", "w"], [829, 1013, 23, 17, "blue", "wb", "w"],
  [876, 1018, 23, 45, "blue", "wbybyrrbr", "wb"], [829, 1074, 23, 12, "green", "", ""], [927, 1015, 23, 34, "blue", "wbgbbp", "wg"],
  [981, 1013, 22, 25, "blue", "wbr", "w"], [1030, 1013, 22, 25, "blue", "wbp", "w"], [1079, 1013, 22, 17, "blue", "wb", "w"], [1134, 1015, 24, 17, "blue", "wb", "h"],
];
const pinColor: Record<string, string> = { w: "#eee", b: "#0a86c8", p: "#7a4a9c", g: "#3a8a1c", r: "#a01818", y: "#c8a020", t: "#107050", h: "#666", ".": "transparent" };
const miniPills: [number, number, string][] = [
  [87, 886, CYAN], [140, 903, CYAN], [155, 920, CYAN], [202, 920, CYAN], [324, 874, "#8fb088"], [326, 881, CYAN], [370, 915, "#8fb088"], [302, 927, CYAN], [497, 893, CYAN],
  [505, 1047, "#8fb088"], [666, 1044, CYAN], [707, 1044, CYAN], [749, 1047, CYAN], [808, 1035, CYAN], [906, 1055, "#48b020"], [908, 1067, "#8fb088"], [959, 1062, CYAN], [986, 1050, "#b070d8"],
];

function Comment({ x, y, w, h, hh, t, tw, pad = 2 }: { x: number; y: number; w: number; h: number; hh: number; t: string; tw?: number; pad?: number }) {
  return (
    <div className="absolute overflow-hidden bg-[#46393f80]" style={{ left: x, top: y, width: w, height: h }}>
      <div className="flex items-center bg-[#454545]" style={{ height: hh, paddingLeft: pad }}>
        <Fit w={tw} size={3.800} className="font-bold text-[#dcdcdc]">{t}</Fit>
      </div>
    </div>
  );
}

function OverviewGraph() {
  const W = "#75676f";
  const B = "#28526c";
  const R = "#651f28";
  return (
    <Panel x={0} y={795} w={1186} h={285} className="bg-[#34242b]">
      <Comment x={14} y={838} w={788} h={141} hh={5} tw={392} pad={4} t="Move to the Target. Once at the TargetObject, check if it is in the damage collision sphere. If the TargetObject is the player, the target may have moved and the Flusher should NOT explode. If it's a Generator or the player hasn't moved, the Flusher explodes" />
      <Comment x={820} y={840} w={366} h={124} hh={5} tw={172} t="Check what Actor to damage using EnemyDamable interface. If it's a Generator, check if the ForceField is active" />
      <Comment x={250} y={989} w={147} h={82} hh={9} tw={132} pad={5} t="animation (physically moves frog) and PlayJumpAnimation (handles animation trigger) is" />
      <Comment x={495} y={996} w={700} h={90} hh={6} tw={92} t="Kamakoi. Apply self damage and spawn explosion particles" />
      <Comment x={1006} y={899} w={70} h={61} hh={5} tw={58} t="Apply Damage to Player or ForceField" />
      <Comment x={1146} y={850} w={40} h={60} hh={9} tw={28} t="Apply Damage to" />
      <Grid x={62} y={909.500} p={78.200} major="#21161b90" minor="#4a3a4225" />
      <Wires
        list={[
          [43, 864, 52, 864, W], [68, 864, 90, 870, W], [108, 869, 127, 871, W], [145, 871, 176, 869, W], [193, 869, 229, 869, W], [247, 869, 288, 871, W], [305, 871, 351, 871, W],
          [305, 877, 326, 917, W], [370, 871, 416, 859, W], [370, 880, 416, 878, W], [344, 917, 368, 912, W], [368, 912, 396, 915, W], [344, 923, 396, 924, "#7a6230"],
          [414, 920, 448, 912, W], [414, 925, 446, 940, W], [104, 888, 127, 876, B], [156, 905, 176, 873, B], [172, 922, 229, 873, B], [246, 927, 288, 876, R],
          [514, 896, 532, 896, B], [550, 895, 580, 879, B], [550, 895, 594, 924, B], [594, 924, 686, 925, B], [600, 857, 611, 859, W], [630, 859, 678, 856, W], [630, 863, 678, 881, W],
          [696, 856, 752, 854, W], [696, 881, 752, 879, W], [705, 920, 894, 883, W, 1.500], [705, 925, 744, 921, B], [744, 921, 824, 926, B], [824, 926, 1018, 926, B],
          [824, 926, 842, 903, B], [860, 902, 893, 888, R], [911, 883, 937, 883, W], [955, 883, 1022, 877, W, 1.500], [956, 888, 1020, 920, W, 1.500], [910, 926, 937, 888, B],
          [956, 893, 1008, 888, B], [1008, 888, 1125, 888, B], [1125, 888, 1156, 879, B], [1040, 877, 1094, 879, W], [1040, 881, 1094, 883, R], [1111, 883, 1157, 874, W],
          [706, 933, 722, 944, W], [676, 891, 678, 910, R], [280, 1021, 315, 1023, W], [558, 1025, 602, 1025, W], [622, 1025, 658, 1022, W], [622, 1029, 658, 1027, B],
          [676, 1022, 700, 1022, W], [718, 1022, 744, 1022, W], [762, 1022, 790, 1022, W], [809, 1022, 832, 1022, W], [850, 1022, 878, 1027, W], [897, 1027, 930, 1024, W],
          [948, 1024, 983, 1022, W], [1001, 1022, 1033, 1022, W], [1050, 1022, 1082, 1022, W], [1098, 1022, 1137, 1024, W], [682, 1047, 700, 1027, B], [724, 1047, 743, 1027, B],
          [766, 1049, 790, 1027, B], [825, 1037, 832, 1027, B], [976, 1064, 983, 1027, B], [1003, 1052, 1033, 1030, "#6b4a80"], [524, 1044, 538, 1034, "#7a6230"], [852, 1080, 878, 1036, "#7a6230"],
        ]}
        extra={
          <>
            <path d="M145 876C180 876 180 890 158 904S60 955 20 980S-20 1017 24 1017H55" stroke={W} strokeWidth="1.200" />
            <path d="M596 1080V1050C592 1034 597 1033 602 1033" stroke={B} strokeWidth="1.200" />
            <path d="M918 1031C900 1034 932 1054 928 1069M918 1031h12M920 1038c-12 8 10 18 6 31" stroke={B} strokeWidth="1.200" />
            <g fill={CYAN}><path d="M593 923h3v2h-3zM651 923h3v2h-3zM743 920h3v2h-3zM824 925h3v2h-3zM909 925h3v2h-3zM994 925h3v2h-3zM1007 887h3v2h-3zM1070 887h3v2h-3zM1124 887h3v2h-3zM917 1030h3v2h-3zM919 1037h3v2h-3z" /></g>
            <path d="M367 911h3v2h-3zM23 1016h3v2h-3z" fill="#fff" />
          </>
        }
      />
      {minis.map(([x, y, w, h, tone, l, r], i) => (
        <div key={i} className="absolute flex flex-col bg-[#101211] shadow-[0_1px_2px_rgba(0,0,0,0.5)]" style={{ left: x, top: y, width: w, height: h }}>
          <div className={`h-[6px] shrink-0 ${tones[tone]}`} />
          <div className="flex justify-between px-[2px] pt-[2px]">
            {[l, r].map((list, j) => (
              <div key={j} className="flex flex-col gap-[2px]">
                {list.split("").map((c, k) => (
                  <span key={k} className="h-[2px] w-[3px] rounded-[1px]" style={{ background: pinColor[c] }} />
                ))}
              </div>
            ))}
          </div>
        </div>
      ))}
      {miniPills.map(([x, y, c], i) => (
        <div key={i} className="absolute flex h-[5px] w-[20px] items-center justify-end rounded-[2px] border-t border-[#9a9a9a] bg-[#1b2226] pr-[2px]" style={{ left: x, top: y }}>
          <span className="mr-[2px] h-[2px] w-[11px] opacity-40" style={{ background: c }} />
          <span className="h-[3px] w-[3px] rounded-full" style={{ background: c }} />
        </div>
      ))}
      <div className="absolute left-[578px] top-[873px] flex h-[12px] w-[33px] items-center justify-center rounded-[1px] border-t border-[#777] bg-[#25282b]">
        <Fit w={16} size={5} className="font-bold text-[#b0b0b0]">IS EMPTY</Fit>
      </div>
      <svg className="absolute left-0 top-0" width="1186" height="1080" fill="#e8f2f8">
        <path d="M589 874h3v2h-3zM594 874h3v2h-3zM599 874h3v2h-3zM589 882h3v2h-3zM594 882h3v2h-3zM599 882h3v2h-3z" fill="#175a80" />
        <path d="M696 846h4v3h-4zM1155 1014h4v3h-4zM332 1012h4v3h-4zM947 1014h4l-1 4zM1038 909h4l-1 4z" />
        <circle cx="370.500" cy="861.500" r="2" /><circle cx="414.500" cy="905.500" r="2" />
      </svg>
      <div className="absolute left-0 top-[795px] flex w-[1186px] flex-col">
        <div className="flex h-[31px] items-center border-t-4 border-[#191919] bg-[#0f0f0f] pt-[4px] text-[#b4b4b4]">
          <svg className="shrink-0" width="26" height="16"><path d="M0 3h7v13l-4-3-3 1z" fill="#aaa" /><path d="M15 7l4 4 4-4" fill="none" stroke="#bbb" strokeWidth="1.500" /></svg>
          <span className="ml-[6px] h-[24px] w-[2px] bg-[#1f1f1f]" />
          <Glyph name="left" className="ml-[7px] text-white" />
          <Glyph name="right" className="ml-[14px] text-[#6a6a6a]" />
          <span className="ml-[7px] h-[24px] w-[2px] bg-[#1f1f1f]" />
          <Glyph name="graph" className="ml-2" />
          <Fit w={187} size={17} className="text-[#858585]" wrap="ml-[13px]">BP_CharacterFrogFlusher</Fit>
          <Glyph name="chevron" className="ml-[2px]" />
          <Fit w={84} size={17} className="text-[#858585]" wrap="ml-px">EventGraph</Fit>
        </div>
        <div className="h-[5px] bg-[#280414]" />
      </div>
      <Box x={415} y={795} w={140} h={3} className="bg-[#252525]" />
      <svg className="absolute left-0 top-0" width="300" height="1080" fill="#fff">
        <path d="M27 885h5l3.500 121 9-7h2.500l8-3v4l-24.500 15zM36 885h12l106 49-6 3-8-3z" />
      </svg>
    </Panel>
  );
}

function AttackEvent() {
  return (
    <Panel x={55} y={937} w={200} h={143} className="bg-[#36272d]">
      <Grid x={82} y={909.500} p={200} major="#2a1e2370" minor="#43343b50" />
      <Wires list={[[224, 1019.500, 256, 1019.500, "#eee", 2.600]]} extra={<path d="M222 1061C240 1060 248 1067 256 1075" stroke="#0f86c6" strokeWidth="2" />} />
      <GNode x={62} y={943} w={182} h={160} hh={51} tone="red" icon="event" title="Attack" tx={38} tw={52} sub="Custom Event" sw={97} s={1.420} stop bias={0.500}
        rows={[{ y: 1019.500, r: X }, { y: 1061, r: { k: "dot", c: CYAN, t: "Attack Target", w: 93 } }]} />
    </Panel>
  );
}

function TokensGraph() {
  const W = "#eee";
  const s = 1.170;
  return (
    <Panel x={1168} y={844} w={752} h={218} className="bg-[#392a30]">
      <Grid x={1331} y={949.500} p={142} major="#271c21" minor="#41323860" />
      <Wires list={[[1168, 909, 1311, 909, W, 2.200], [1568, 909, 1613, 909, W, 2.200], [1258, 1024, 1311, 983, "#0f80bd", 1.600]]} />
      <div className="absolute left-[1100px] top-[845px] h-[124px] w-[84px] rounded-[9px] border border-black bg-[linear-gradient(180deg,#555_0%,#2e2e2e_33%,#111_36%,#10120f_100%)] shadow-[0_3px_6px_rgba(0,0,0,0.5)]" />
      <Pill x={1150} y={1004.500} w={131} h={41} glow="cyan" t="Target Actor" tw={69} s={s} />
      <GNode x={1298} y={845.500} w={287} h={156} hh={42} tone="blue" icon="event" title="Return Attack Tokens" tx={31.500} tw={141} sub="Target is Attack Token Requesterable" sw={216} s={s}
        rows={[{ y: 909.500, l: X, r: X }, { y: 947, l: { k: "ring", c: "#b8c870", t: "Target", w: 38, self: true } }, { y: 983.500, l: inPin("Attack Target", 78) }]} bias={1} />
      <GNode x={1599} y={863} w={345} h={105} hh={24} tone="blue" icon="window" title="Call On Attack Behaviour Finished Delegate" tx={31.500} tw={284} s={s}
        rows={[{ y: 909, l: X }, { y: 946.500, l: { k: "ring", c: CYAN, t: "Target", w: 38, self: true } }]} />
    </Panel>
  );
}

export default function App() {
  return (
    <main className="relative h-[1080px] w-[1920px] overflow-hidden bg-white [font-family:Roboto,sans-serif]">
      <TaskGraph />
      <FunctionWindow />
      <CharacterGraph />
      <OverviewGraph />
      <AttackEvent />
      <TokensGraph />
      <svg className="absolute left-0 top-0" width="1920" height="1080" fill="#fff">
        <path d="M1157.700 812l31.300 33.500-3.500 1.500-10.500-10.500-3.500 1-9-11L1115 993l173.500-31-11.500-12-5-13 29 31.700L1106 1004z" />
      </svg>
      <Box x={5} y={819} w={98} h={66} className="border-[12px] border-white" />
      <Box x={1034} y={981} w={147} h={99} className="border-[12px] border-[#ffbd59]" />
      <Box x={1260} y={834} w={333} h={224} className="border-[12px] border-[#ffbd59]" />
    </main>
  );
}
